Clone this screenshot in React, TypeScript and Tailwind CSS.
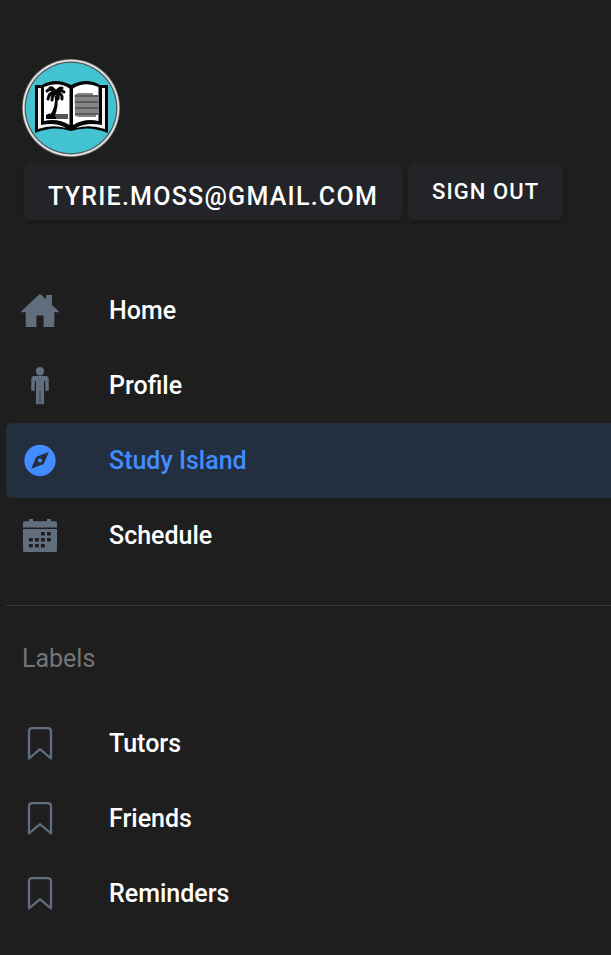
import type { ReactNode } from "react";

type Item = { label: string; icon: ReactNode; selected?: boolean };

const iconClass = "h-[38px] w-[38px] shrink-0";

function HomeIcon() {
  return (
    <svg viewBox="0 0.5 38 38" className={iconClass} fill="currentColor" aria-hidden="true">
      <path d="M19 2.3 L25 7.9 V3.5 H31 V13.4 L38 20.1 V20.7 H33.3 V35.5 H22.6 V24 H15.4 V35.5 H4.7 V20.7 H0 V20.1 Z" />
    </svg>
  );
}

function PersonIcon() {
  return (
    <svg viewBox="0 0.5 38 38" className={iconClass} fill="currentColor" aria-hidden="true">
      <circle cx="19" cy="4.7" r="4.2" />
      <path d="M13.3 9.6 H24.7 Q27.7 9.6 27.7 12.6 V24.3 H24.2 V14.8 H23 V37.7 H19.5 V24 H18.5 V37.7 H15 V14.8 H13.8 V24.3 H10.3 V12.6 Q10.3 9.6 13.3 9.6 Z" />
      <path d="M18.4 23.5 H19.6 V37.7 H18.4 Z" opacity="0.65" />
    </svg>
  );
}

function CompassIcon() {
  return (
    <svg viewBox="0 0.5 38 38" className={iconClass} fill="currentColor" aria-hidden="true">
      <path
        fillRule="evenodd"
        d="M19 3.3 A15.7 15.7 0 1 1 19 34.7 A15.7 15.7 0 1 1 19 3.3 Z M27.8 10.4 L15.3 15.3 L10.2 27.3 L22.7 22.6 Z M19 17 A2 2 0 1 0 19 21 A2 2 0 1 0 19 17 Z"
      />
    </svg>
  );
}

function CalendarIcon() {
  return (
    <svg viewBox="0 0.5 38 38" className={iconClass} fill="currentColor" aria-hidden="true">
      <path d="M3.5 4.7 H8 V2.5 H12 V4.7 H26 V2.5 H30 V4.7 H34.5 Q36 4.7 36 6.2 V11 H2 V6.2 Q2 4.7 3.5 4.7 Z" />
      <path
        fillRule="evenodd"
        d="M2 12.5 H36 V34 Q36 35.5 34.5 35.5 H3.5 Q2 35.5 2 34 Z M20 15.5 v3.6 h3.8 v-3.6 Z M26 15.5 v3.6 h3.8 v-3.6 Z M8 21.5 v3.6 h3.8 v-3.6 Z M14 21.5 v3.6 h3.8 v-3.6 Z M20 21.5 v3.6 h3.8 v-3.6 Z M26 21.5 v3.6 h3.8 v-3.6 Z M8 27.5 v3.6 h3.8 v-3.6 Z M14 27.5 v3.6 h3.8 v-3.6 Z M20 27.5 v3.6 h3.8 v-3.6 Z"
      />
    </svg>
  );
}

function BookmarkIcon() {
  return (
    <svg
      viewBox="0 0.5 38 38"
      className={iconClass}
      fill="none"
      stroke="currentColor"
      strokeWidth="2.3"
      strokeLinejoin="round"
      aria-hidden="true"
    >
      <path d="M11.2 3.6 H26.8 Q30 3.6 30 6.8 V34 L19 24.6 L8 34 V6.8 Q8 3.6 11.2 3.6 Z" />
    </svg>
  );
}

function Logo() {
  return (
    <svg viewBox="0 0 98 98" className="block h-[98px] w-[98px]" role="img" aria-label="Study Island">
      <circle cx="49" cy="49" r="49" fill="#777777" />
      <circle cx="49" cy="49" r="48.2" fill="#e4e4e4" />
      <circle cx="49" cy="49" r="46.4" fill="#4a5555" />
      <circle cx="49" cy="49" r="45.2" fill="#43c3d2" />
      <path d="M13 26 H20 Q33 18 49 26 Q65 18 78 26 H86 V74 Q66 66 49 72 Q32 66 13 74 Z" fill="#050505" />
      <path d="M16 29 H19 V66 Q34 63 44 69 Q30 65 16 70 Z M83 29 H80 V66 Q64 63 54 69 Q68 65 83 70 Z" fill="#f4f4f4" />
      <path d="M22 28 Q36 22 47.5 29.5 V66 Q36 59 22 62 Z M76.5 28 Q63 22 51 29.5 V66 Q63 59 76.5 62 Z" fill="#ffffff" />
      <path d="M52.5 36 L56 34 H71 V36 H76 V56 H74 V58 H57 L53 57 Z" fill="#858585" />
      <path d="M53 37 H76 M53 43 H76 M53 49 H76 M53 55 H76" stroke="#4d4d4d" strokeWidth="1.4" />
      <path d="M32 55 H46 V60 H25 Z" fill="#555555" />
      <path d="M24 60 V56 Q29 52 34 58 V60 Z" fill="#050505" />
      <path d="M32.6 37 Q34.5 47 27.5 57 L32.2 58 Q37.5 47 34.6 36 Z" fill="#050505" />
      <path
        d="M34 34 Q27 33 26 40 M34 34 Q28 28 25 32 M34 34 Q31 28 28 29 M34 34 Q36 29 40 29 M34 34 Q39 30 42 33 M34 34 Q41 34 40 40 M34 34 Q30 36 30 41 M34 34 Q37 36 36 40"
        fill="none"
        stroke="#050505"
        strokeWidth="3"
        strokeLinecap="round"
      />
    </svg>
  );
}

const pages: Item[] = [
  { label: "Home", icon: <HomeIcon /> },
  { label: "Profile", icon: <PersonIcon /> },
  { label: "Study Island", icon: <CompassIcon />, selected: true },
  { label: "Schedule", icon: <CalendarIcon /> },
];

const labels: Item[] = [
  { label: "Tutors", icon: <BookmarkIcon /> },
  { label: "Friends", icon: <BookmarkIcon /> },
  { label: "Reminders", icon: <BookmarkIcon /> },
];

function MenuList({ items }: { items: Item[] }) {
  return (
    <ul>
      {items.map((item) => (
        <li key={item.label}>
          <a
            href="#"
            aria-current={item.selected ? "page" : undefined}
            className={
              item.selected
                ? "flex h-[75px] items-center gap-[50px] rounded-l-md bg-[#232e3e] pl-[15px] text-[#428cff]"
                : "flex h-[75px] items-center gap-[50px] rounded-l-md pl-[15px] text-[#616e7e]"
            }
          >
            {item.icon}
            <span
              className={
                item.selected
                  ? "text-[25px] leading-[39px] font-medium"
                  : "text-[25px] leading-[39px] font-medium text-white"
              }
            >
              {item.label}
            </span>
          </a>
        </li>
      ))}
    </ul>
  );
}

const buttonClass =
  "flex h-14 items-center rounded-md bg-[#222428] px-6 font-medium tracking-wider text-white uppercase shadow-md";

export default function App() {
  return (
    <div className="min-h-screen bg-[#1e1e1e] pt-[59px] pb-6 pl-[6px] font-[Roboto,sans-serif]">
      <header className="pl-4">
        <Logo />
        <div className="mt-[7px] flex flex-wrap gap-[6px] pl-[2px]">
          <button type="button" className={`${buttonClass} pt-2.5 text-[25px]`}>
            tyrie.moss@gmail.com
          </button>
          <button type="button" className={`${buttonClass} pb-0.5 text-[22px]`}>
            Sign Out
          </button>
        </div>
      </header>
      <nav aria-label="Pages" className="mt-[53px] border-b border-[#373737] pb-8">
        <MenuList items={pages} />
      </nav>
      <nav aria-labelledby="labels-heading" className="pt-[33px]">
        <h2 id="labels-heading" className="mb-[27px] pl-4 text-[25px] leading-10 text-[#757575]">
          Labels
        </h2>
        <MenuList items={labels} />
      </nav>
    </div>
  );
}
